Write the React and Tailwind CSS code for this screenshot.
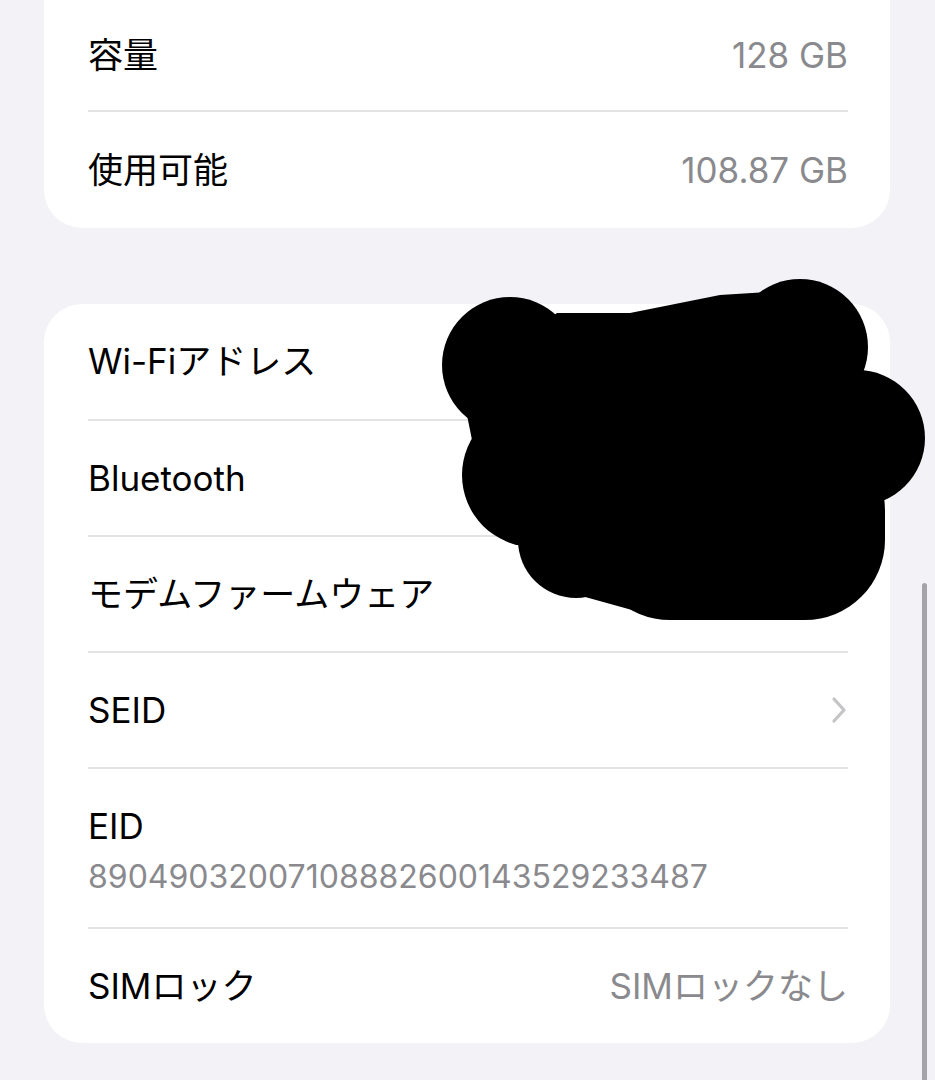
export default function App() {
  const font = "font-['Inter','Noto_Sans_CJK_JP',sans-serif]";
  const Sep = () => <div className="ml-[44px] mr-[42px] h-[2px] bg-[#e3e3e6]" />;
  const Row = ({ label, value, chevron, h = "h-[114px]" }) => (
    <div className={`flex items-center justify-between pl-[44px] pr-[42px] ${h}`}>
      <span className="text-[35px] text-black">{label}</span>
      {value && <span className="text-[35px] text-[#8a8a8e]">{value}</span>}
      {chevron && (
        <svg width="18" height="28" viewBox="0 0 18 28">
          <path d="M4 3 L14 14 L4 25" fill="none" stroke="#c4c4c7" strokeWidth="3.2" strokeLinecap="round" strokeLinejoin="round" />
        </svg>
      )}
    </div>
  );
  return (
    <div className={`relative h-[1080px] w-[935px] overflow-hidden bg-[#f2f2f7] ${font}`}>
      <div className="mx-[44px] w-[846px] bg-white rounded-b-[38px]">
        <Row label="容量" value="128 GB" h="h-[110px]" />
        <Sep />
        <Row label="使用可能" value="108.87 GB" h="h-[116px]" />
      </div>
      <div className="mx-[44px] mt-[76px] w-[846px] bg-white rounded-[38px]">
        <Row label="Wi-Fiアドレス" h="h-[115px]" />
        <Sep />
        <Row label="Bluetooth" />
        <Sep />
        <Row label="モデムファームウェア" />
        <Sep />
        <Row label="SEID" chevron />
        <Sep />
        <div className="flex h-[158px] flex-col justify-center pl-[44px] gap-[10px] pt-[6px]">
          <span className="text-[35px] leading-[42px] text-black">EID</span>
          <span className="text-[32px] leading-[40px] text-[#8a8a8e]">89049032007108882600143529233487</span>
        </div>
        <Sep />
        <Row label="SIMロック" value="SIMロックなし" />
      </div>
      <svg className="absolute left-[430px] top-[270px]" width="505" height="360" viewBox="430 270 505 360">
        <g fill="#000">
          <circle cx="510" cy="365" r="68" />
          <circle cx="800" cy="347" r="68" />
          <circle cx="857" cy="438" r="68" />
          <circle cx="534" cy="475" r="72" />
          <circle cx="576" cy="540" r="58" />
          <rect x="590" y="430" width="295" height="190" rx="80" ry="80" />
          <polygon points="557,313 630,313 720,295 800,290 870,400 880,540 800,610 650,615 560,590 480,480 460,380" />
        </g>
      </svg>
      <div className="absolute left-[922px] top-[583px] h-[520px] w-[5px] rounded-full bg-[#a3a3a8]" />
    </div>
  );
}
